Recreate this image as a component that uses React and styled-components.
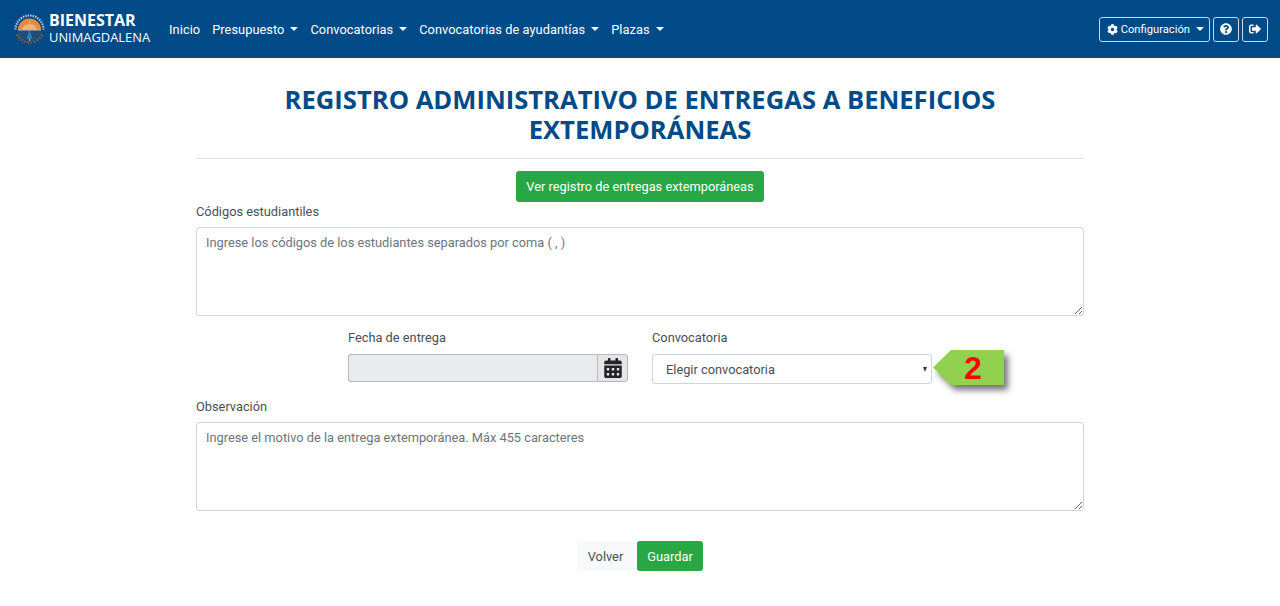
import React from "react";
import styled, { createGlobalStyle } from "styled-components";
import { FaCog, FaQuestionCircle, FaSignOutAlt, FaCalendarAlt } from "react-icons/fa";

const GlobalStyle = createGlobalStyle`
  html, body { margin: 0; padding: 0; background: #fff; }
  body { font-family: Roboto, "Liberation Sans", sans-serif; font-size: 12.8px; color: #495057; }
  * { box-sizing: border-box; }
`;

const Navbar = styled.nav`
  height: 58px;
  background: #004a87;
  display: flex;
  align-items: center;
  padding: 0 12px 0 13px;
  color: #fff;
`;
const Brand = styled.div`
  display: flex;
  align-items: center;
  gap: 3px;
  margin-right: 19px;
`;
const BrandText = styled.div`
  font-family: "Open Sans", sans-serif;
  color: #fff;
  line-height: 17px;
  font-size: 12.9px;
  white-space: nowrap;
  margin-top: -1px;
  b { display: block; font-size: 16px; font-weight: 700; line-height: 17px; }
`;
const NavLinks = styled.div`
  display: flex;
  gap: 12px;
  flex: 1;
`;
const NavLink = styled.span`
  font-size: 12.8px;
  font-weight: 400;
  letter-spacing: 0.05px;
  color: #fff;
  display: flex;
  align-items: center;
`;
const Caret = styled.i`
  display: inline-block;
  margin-left: ${(p) => p.$gap || 6}px;
  border-top: 4px solid currentColor;
  border-left: 4px solid transparent;
  border-right: 4px solid transparent;
`;
const NavActions = styled.div`
  display: flex;
  gap: 3px;
`;
const OutlineButton = styled.button`
  height: 25px;
  min-width: 26px;
  padding: 0 5px 0 7px;
  background: transparent;
  border: 1px solid #c8d8e6;
  border-radius: 3px;
  color: #fff;
  font-family: Roboto, sans-serif;
  font-size: 11.2px;
  display: flex;
  align-items: center;
  justify-content: center;
  gap: 3px;
`;
const IconButton = styled(OutlineButton)`
  padding: 0;
`;
const Page = styled.main`
  width: 888px;
  margin: 0 auto;
  padding-top: 27px;
`;
const Title = styled.h1`
  margin: 0;
  font-family: "Open Sans", sans-serif;
  font-size: 25.6px;
  font-weight: 700;
  line-height: 30px;
  color: #004a87;
  text-align: center;
  padding: 0 60px 13px;
  border-bottom: 1px solid #dee2e6;
`;
const Center = styled.div`
  display: flex;
  justify-content: center;
  gap: 3px;
  margin-top: ${(p) => p.$top}px;
`;
const GreenButton = styled.button`
  height: ${(p) => p.$h}px;
  width: ${(p) => p.$w}px;
  padding: 0;
  background: #28a745;
  border: 0;
  border-radius: 3px;
  color: #fff;
  font-family: Roboto, sans-serif;
  font-size: 12.8px;
  font-weight: 400;
`;
const LightButton = styled.button`
  height: 30px;
  width: 57px;
  padding: 0;
  background: #f8f9fa;
  border: 0;
  border-radius: 3px;
  color: #495057;
  font-family: Roboto, sans-serif;
  font-size: 12.8px;
`;
const Label = styled.div`
  font-size: 12.8px;
  line-height: 16px;
  color: #495057;
  margin-bottom: ${(p) => p.$gap || 8}px;
`;
const Field = styled.div`
  margin-top: ${(p) => p.$top}px;
`;
const Area = styled.textarea`
  display: block;
  width: 888px;
  height: 89px;
  padding: 6px 9px;
  border: 1px solid #ced4da;
  border-radius: 3px;
  font-family: Roboto, sans-serif;
  font-size: 12.8px;
  line-height: 17px;
  color: #495057;
  &::placeholder { color: #6c757d; opacity: 1; }
`;
const Row = styled.div`
  display: grid;
  grid-template-columns: 280px 280px;
  justify-content: center;
  column-gap: 24px;
  margin-top: 14px;
`;
const DateGroup = styled.div`
  display: flex;
  height: 28px;
`;
const DateInput = styled.div`
  flex: 1;
  background: #e9ecef;
  border: 1px solid #b8b8b8;
  border-right: 0;
  border-radius: 3px 0 0 3px;
`;
const DateAddon = styled.div`
  width: 31px;
  background: #e6e6e6;
  border: 1px solid #b8b8b8;
  border-radius: 0 3px 3px 0;
  color: #212529;
  display: flex;
  align-items: center;
  justify-content: center;
  font-size: 20px;
`;
const SelectWrap = styled.div`
  position: relative;
`;
const SelectBox = styled.div`
  height: 30px;
  border: 1px solid #ced4da;
  border-radius: 3px;
  padding: 0 13px;
  display: flex;
  align-items: center;
  justify-content: space-between;
  font-size: 12.8px;
  color: #495057;
`;
const SelectCaret = styled.i`
  margin-right: -9px;
  border-top: 5px solid #343a40;
  border-left: 2.5px solid transparent;
  border-right: 2.5px solid transparent;
`;
const Callout = styled.div`
  position: absolute;
  left: 281px;
  top: -4px;
  width: 71px;
  height: 35px;
  filter: drop-shadow(4px 5px 3px rgba(0, 0, 0, 0.55));
`;
const CalloutShape = styled.div`
  width: 100%;
  height: 100%;
  background: #92d050;
  clip-path: polygon(0 50%, 18px 0, 100% 0, 100% 100%, 18px 100%);
  color: #f00;
  font-family: "Liberation Sans", sans-serif;
  font-weight: 700;
  font-size: 32px;
  line-height: 36px;
  padding-left: 31px;
`;

const Logo = () => (
  <svg width="33" height="33" viewBox="0 0 33 33">
    <path d="M2.500 16.500a14 14 0 0 1 28 0" stroke="#b6c6d4" strokeWidth="2.200" strokeDasharray="1.500 1" fill="none" />
    <path d="M4 21.500a14 14 0 0 0 25 0" stroke="#8a5a3c" strokeWidth="2.400" strokeDasharray="2 1.200" fill="none" />
    <circle cx="16.500" cy="17" r="11.500" fill="#1f4f78" />
    <path d="M5 17a11.500 11.500 0 0 1 23 0z" fill="#e8893f" />
    <path d="M9 17a7.500 6 0 0 1 15 0z" fill="#f3b27a" />
    <path d="M16.500 7v21M5 17h23" stroke="#aeb9c2" strokeWidth="1" fill="none" />
    <path d="M13.500 26l3-9 3 9z" fill="#2f7fb0" />
  </svg>
);

export default function App() {
  return (
    <>
      <GlobalStyle />
      <Navbar>
        <Brand>
          <Logo />
          <BrandText>
            <b>BIENESTAR</b>
            UNIMAGDALENA
          </BrandText>
        </Brand>
        <NavLinks>
          <NavLink>Inicio</NavLink>
          <NavLink>Presupuesto<Caret /></NavLink>
          <NavLink>Convocatorias<Caret /></NavLink>
          <NavLink>Convocatorias de ayudantías<Caret /></NavLink>
          <NavLink>Plazas<Caret /></NavLink>
        </NavLinks>
        <NavActions>
          <OutlineButton><FaCog size={11} /> Configuración<Caret $gap={3} /></OutlineButton>
          <IconButton><FaQuestionCircle size={12} /></IconButton>
          <IconButton><FaSignOutAlt size={12} /></IconButton>
        </NavActions>
      </Navbar>
      <Page>
        <Title>REGISTRO ADMINISTRATIVO DE ENTREGAS A BENEFICIOS EXTEMPORÁNEAS</Title>
        <Center $top={12}>
          <GreenButton $h={31} $w={248}>Ver registro de entregas extemporáneas</GreenButton>
        </Center>
        <Field $top={2}>
          <Label $gap={7}>Códigos estudiantiles</Label>
          <Area placeholder="Ingrese los códigos de los estudiantes separados por coma ( , )" />
        </Field>
        <Row>
          <div>
            <Label>Fecha de entrega</Label>
            <DateGroup>
              <DateInput />
              <DateAddon><FaCalendarAlt /></DateAddon>
            </DateGroup>
          </div>
          <div>
            <Label>Convocatoria</Label>
            <SelectWrap>
              <SelectBox>Elegir convocatoria<SelectCaret /></SelectBox>
              <Callout><CalloutShape>2</CalloutShape></Callout>
            </SelectWrap>
          </div>
        </Row>
        <Field $top={15}>
          <Label $gap={7}>Observación</Label>
          <Area placeholder="Ingrese el motivo de la entrega extemporánea. Máx 455 caracteres" />
        </Field>
        <Center $top={30}>
          <LightButton>Volver</LightButton>
          <GreenButton $h={30} $w={66}>Guardar</GreenButton>
        </Center>
      </Page>
    </>
  );
}
